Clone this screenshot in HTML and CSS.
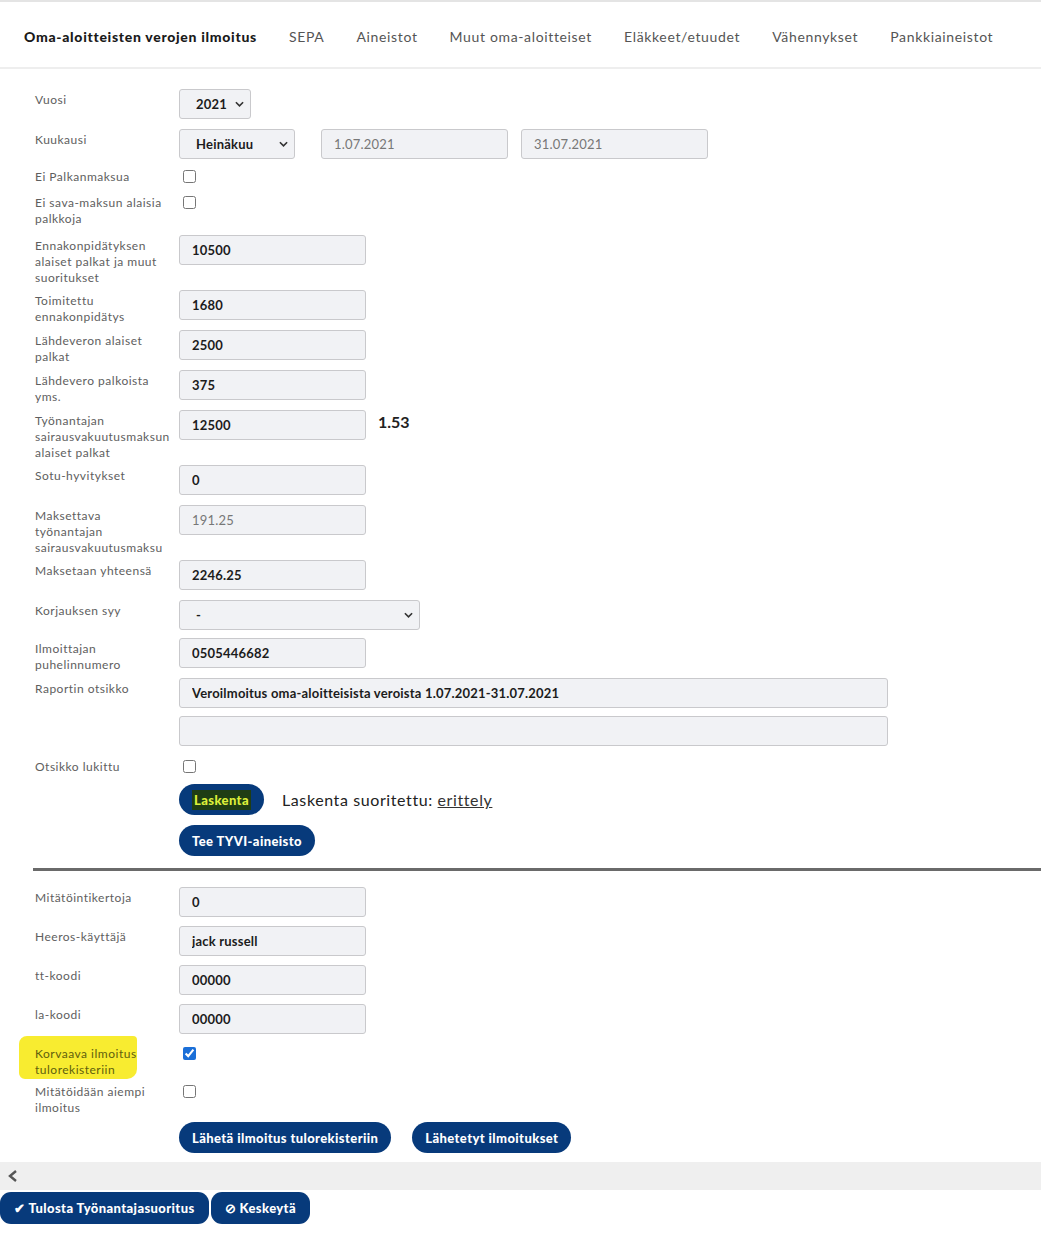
FILE: index.html
```html
<!DOCTYPE html>
<html>
<head>
  <meta charset="utf-8">
  <title>Oma-aloitteisten verojen ilmoitus</title>
  <link rel="stylesheet" href="styles.css">
</head>
<body>
  <nav class="tabs">
    <a class="tab active">Oma-aloitteisten verojen ilmoitus</a>
    <a class="tab">SEPA</a>
    <a class="tab">Aineistot</a>
    <a class="tab">Muut oma-aloitteiset</a>
    <a class="tab">Eläkkeet/etuudet</a>
    <a class="tab">Vähennykset</a>
    <a class="tab">Pankkiaineistot</a>
  </nav>

  <main class="form">
    <div class="row">
      <label class="lbl">Vuosi</label>
      <div class="ctl">
        <div class="select w-year">
          <select><option>2021</option></select>
          <svg class="chev" viewBox="0 0 10 6"><polyline points="1,1 5,5 9,1"/></svg>
        </div>
      </div>
    </div>
    <div class="row tight">
      <label class="lbl">Kuukausi</label>
      <div class="ctl inline">
        <div class="select w-month">
          <select><option>Heinäkuu</option></select>
          <svg class="chev" viewBox="0 0 10 6"><polyline points="1,1 5,5 9,1"/></svg>
        </div>
        <input class="field date" value="1.07.2021" disabled>
        <input class="field date" value="31.07.2021" disabled>
      </div>
    </div>
    <div class="row">
      <label class="lbl">Ei Palkanmaksua</label>
      <div class="ctl check"><input type="checkbox"></div>
    </div>
    <div class="row loose">
      <label class="lbl">Ei sava-maksun alaisia<br>palkkoja</label>
      <div class="ctl check"><input type="checkbox"></div>
    </div>
    <div class="row">
      <label class="lbl">Ennakonpidätyksen<br>alaiset palkat ja muut<br>suoritukset</label>
      <div class="ctl"><input class="field" value="10500"></div>
    </div>
    <div class="row">
      <label class="lbl">Toimitettu<br>ennakonpidätys</label>
      <div class="ctl"><input class="field" value="1680"></div>
    </div>
    <div class="row">
      <label class="lbl">Lähdeveron alaiset<br>palkat</label>
      <div class="ctl"><input class="field" value="2500"></div>
    </div>
    <div class="row">
      <label class="lbl">Lähdevero palkoista<br>yms.</label>
      <div class="ctl"><input class="field" value="375"></div>
    </div>
    <div class="row">
      <label class="lbl">Työnantajan<br>sairausvakuutusmaksun<br>alaiset palkat</label>
      <div class="ctl inline">
        <input class="field" value="12500">
        <span class="rate">1.53</span>
      </div>
    </div>
    <div class="row">
      <label class="lbl">Sotu-hyvitykset</label>
      <div class="ctl"><input class="field" value="0"></div>
    </div>
    <div class="row">
      <label class="lbl">Maksettava<br>työnantajan<br>sairausvakuutusmaksu</label>
      <div class="ctl"><input class="field" value="191.25" disabled></div>
    </div>
    <div class="row">
      <label class="lbl">Maksetaan yhteensä</label>
      <div class="ctl"><input class="field" value="2246.25"></div>
    </div>
    <div class="row snug">
      <label class="lbl">Korjauksen syy</label>
      <div class="ctl">
        <div class="select w-reason">
          <select><option>-</option></select>
          <svg class="chev" viewBox="0 0 10 6"><polyline points="1,1 5,5 9,1"/></svg>
        </div>
      </div>
    </div>
    <div class="row">
      <label class="lbl">Ilmoittajan<br>puhelinnumero</label>
      <div class="ctl"><input class="field" value="0505446682"></div>
    </div>
    <div class="row snug">
      <label class="lbl">Raportin otsikko</label>
      <div class="ctl"><input class="field wide" value="Veroilmoitus oma-aloitteisista veroista 1.07.2021-31.07.2021"></div>
    </div>
    <div class="row">
      <label class="lbl"></label>
      <div class="ctl"><input class="field wide" value=""></div>
    </div>
    <div class="row">
      <label class="lbl">Otsikko lukittu</label>
      <div class="ctl check"><input type="checkbox"></div>
    </div>
    <div class="btn-row">
      <button class="btn"><span class="hl">Laskenta</span></button>
      <span class="status">Laskenta suoritettu: <a class="link">erittely</a></span>
    </div>
    <div class="btn-row">
      <button class="btn">Tee TYVI-aineisto</button>
    </div>

    <hr class="divider">

    <div class="lower">
      <div class="row">
        <label class="lbl">Mitätöintikertoja</label>
        <div class="ctl"><input class="field" value="0"></div>
      </div>
      <div class="row">
        <label class="lbl">Heeros-käyttäjä</label>
        <div class="ctl"><input class="field" value="jack russell"></div>
      </div>
      <div class="row">
        <label class="lbl">tt-koodi</label>
        <div class="ctl"><input class="field" value="00000"></div>
      </div>
      <div class="row">
        <label class="lbl">la-koodi</label>
        <div class="ctl"><input class="field" value="00000"></div>
      </div>
      <div class="row">
        <label class="lbl marked">Korvaava ilmoitus<br>tulorekisteriin</label>
        <div class="ctl check"><input type="checkbox" checked></div>
      </div>
      <div class="row">
        <label class="lbl">Mitätöidään aiempi<br>ilmoitus</label>
        <div class="ctl check"><input type="checkbox"></div>
      </div>
      <div class="btn-row">
        <button class="btn">Lähetä ilmoitus tulorekisteriin</button>
        <button class="btn">Lähetetyt ilmoitukset</button>
      </div>
    </div>
  </main>

  <div class="scroll-bar">
    <svg class="back" viewBox="0 0 10 12"><polyline points="8,1 2,6 8,11"/></svg>
  </div>

  <div class="actions">
    <button class="btn square">&#10004; Tulosta Työnantajasuoritus</button>
    <button class="btn square">&#8856; Keskeytä</button>
  </div>
</body>
</html>
```

FILE: styles.css
```css
/* Payroll tax form: top tabs, label/field rows, action buttons */
body {
  margin: 0;
  font-family: Lato, "Open Sans", sans-serif;
  color: #222;
  background: #fff;
}

/* Tabs */
.tabs {
  display: flex;
  align-items: center;
  gap: 32px;
  height: 61px;
  padding: 4px 0 0 24px;
  border-top: 2px solid #e4e4e4;
  border-bottom: 2px solid #eeeeee;
  white-space: nowrap;
  overflow: hidden;
}

.tab {
  font-size: 14px;
  letter-spacing: 0.65px;
  color: #555;
  cursor: pointer;
}

.tab.active {
  font-weight: 900;
  letter-spacing: 0.7px;
  color: #1a1a1a;
}

/* Form rows */
.form {
  padding: 20px 0 0 33px;
}

.row {
  display: flex;
  align-items: flex-start;
  margin-bottom: 4px;
}

.row.tight { margin-bottom: 1px; }
.row.snug { margin-bottom: 2px; }
.row.loose { margin-bottom: 8px; }

.lbl {
  position: relative;
  flex: 0 0 144px;
  padding: 3px 0 0 2px;
  font-size: 12px;
  line-height: 16px;
  letter-spacing: 0.5px;
  color: #5e5e5e;
}

.ctl {
  padding-bottom: 6px;
}

.ctl.inline {
  display: flex;
  align-items: center;
}

.ctl.check {
  height: 16px;
}

.ctl.check input {
  width: 13px;
  height: 13px;
  margin: 4px 0 0 4px;
  accent-color: #1b6fd8;
}

.field {
  box-sizing: border-box;
  width: 187px;
  height: 30px;
  padding: 0 12px;
  border: 1px solid #c9c9cc;
  border-radius: 3px;
  background: #f1f2f5;
  font-family: inherit;
  font-size: 13px;
  font-weight: 700;
  letter-spacing: 0.2px;
  color: #1c1c1c;
}

.field:disabled {
  font-weight: 400;
  color: #777;
}

.field.date {
  margin-left: 26px;
}

.field.date + .field.date {
  margin-left: 13px;
}

.field.wide {
  width: 709px;
}

.rate {
  position: relative;
  top: -4px;
  margin-left: 12px;
  font-size: 16px;
  font-weight: 700;
  color: #222;
}

/* Selects with a drawn chevron */
.select {
  position: relative;
  height: 30px;
}

.select select {
  box-sizing: border-box;
  width: 100%;
  height: 30px;
  padding: 0 0 0 16px;
  border: 1px solid #c9c9cc;
  border-radius: 3px;
  background: #f1f2f5;
  font-family: inherit;
  font-size: 13px;
  font-weight: 700;
  letter-spacing: 0.2px;
  color: #1c1c1c;
  appearance: none;
  -webkit-appearance: none;
}

.select .chev {
  position: absolute;
  right: 7px;
  top: 12px;
  width: 9px;
  height: 6px;
  fill: none;
  stroke: #333;
  stroke-width: 1.8;
}

.w-year { width: 72px; }
.w-month { width: 116px; }
.w-reason { width: 241px; }

/* Buttons */
.btn-row {
  display: flex;
  align-items: center;
  gap: 21px;
  margin: 6px 0 10px 146px;
}

.btn-row + .btn-row {
  margin-top: 0;
}

.btn {
  height: 31px;
  padding: 0 13px;
  border: none;
  border-radius: 16px;
  background: #073a7b;
  color: #fff;
  font-family: inherit;
  font-size: 13px;
  font-weight: 900;
  letter-spacing: 0.4px;
  cursor: pointer;
}

.btn .hl {
  display: inline-block;
  padding: 2px 2px;
  background: #1f3d14;
  color: #dcef3a;
}

.status {
  margin-left: -3px;
  font-size: 16px;
  letter-spacing: 0.6px;
  color: #222;
}

.link {
  color: #333;
  text-decoration: underline;
}

.divider {
  height: 0;
  margin: 12px 0 16px 0;
  border: none;
  border-top: 3px solid #6a6a6a;
}

.lower .row {
  margin-bottom: 3px;
}

.lower .btn-row {
  margin-top: 6px;
  margin-bottom: 9px;
}

/* Highlighted label */
.lbl.marked {
  color: #5f600e;
}

.lbl.marked::before {
  content: "";
  position: absolute;
  left: -14px;
  top: -7px;
  width: 118px;
  height: 43px;
  background: #f8ec30;
  border-radius: 8px 4px 10px 6px;
  z-index: -1;
}

/* Bottom bar */
.scroll-bar {
  height: 28px;
  background: #efefef;
  display: flex;
  align-items: center;
  padding-left: 8px;
}

.back {
  width: 10px;
  height: 12px;
  fill: none;
  stroke: #555;
  stroke-width: 2.4;
}

.actions {
  display: flex;
  gap: 2px;
  margin-top: 2px;
}

.btn.square {
  height: 32px;
  border-radius: 11px;
  padding: 0 14px;
}
```
